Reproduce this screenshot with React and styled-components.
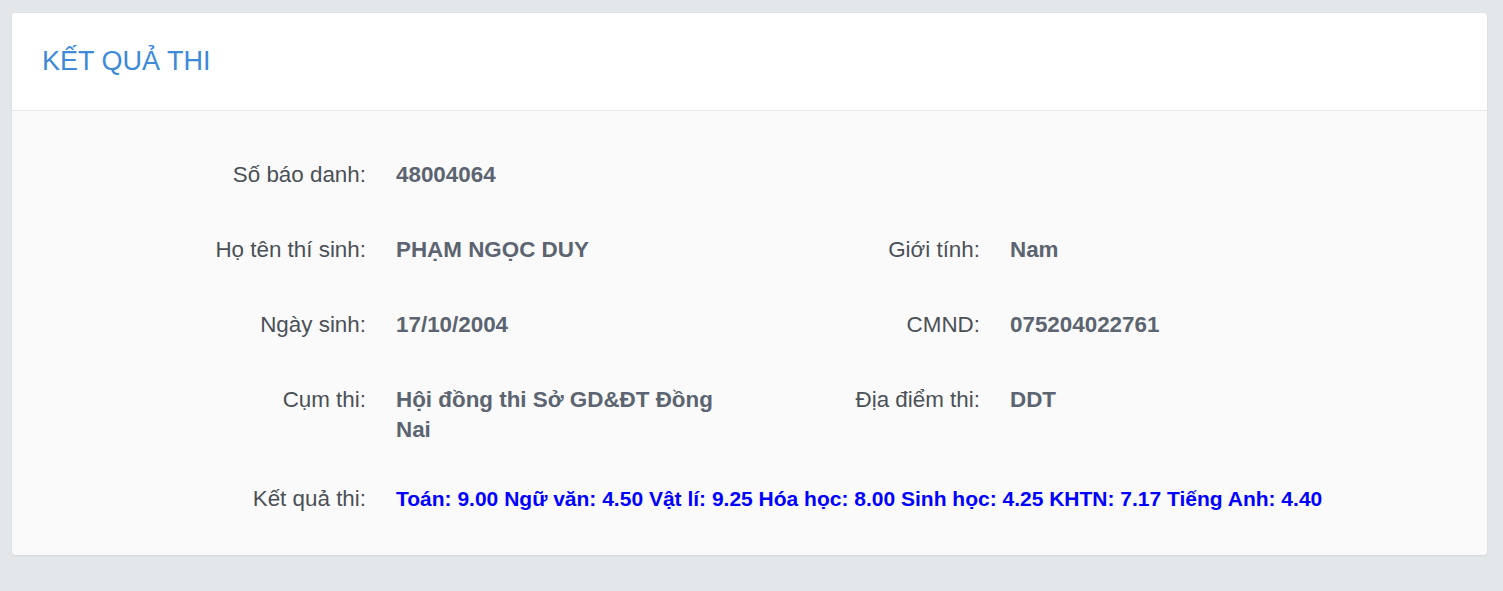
import React from "react";
import styled, { createGlobalStyle } from "styled-components";

const Global = createGlobalStyle`
  html, body { margin: 0; padding: 0; }
  body {
    background: #e3e7ea;
    font-family: "Liberation Sans", Arial, sans-serif;
  }
`;

const Page = styled.div`
  padding: 13px 16px 36px 12px;
`;

const Card = styled.section`
  background: #fafafa;
  border-radius: 4px;
  box-shadow: 0 1px 2px rgba(0, 0, 0, 0.08);
  overflow: hidden;
`;

const Header = styled.header`
  background: #ffffff;
  height: 97px;
  border-bottom: 1px solid #e5e7e9;
  display: flex;
  align-items: center;
  padding: 0 30px;
`;

const Title = styled.h1`
  margin: 0;
  font-weight: 400;
  font-size: 27px;
  color: #3d8bd8;
  letter-spacing: 0;
`;

const Body = styled.div`
  padding: 49px 0 41px;
  display: grid;
  grid-template-columns: 354px 340px 214px 1fr;
  column-gap: 30px;
  row-gap: 45px;
  line-height: 30px;
`;

const Label = styled.div`
  text-align: right;
  font-size: 22.4px;
  color: #4b5057;
  grid-column: ${(p) => p.$col};
  margin-top: ${(p) => p.$shift || 0}px;
`;

const Value = styled.div`
  font-size: 22.4px;
  font-weight: 700;
  color: #5b6470;
  grid-column: ${(p) => p.$col};
`;

const Scores = styled.div`
  grid-column: 2 / 5;
  font-size: 21px;
  font-weight: 700;
  color: #0000ff;
  margin-top: ${(p) => p.$shift || 0}px;
`;

export default function App() {
  return (
    <>
      <Global />
      <Page>
        <Card>
          <Header>
            <Title>KẾT QUẢ THI</Title>
          </Header>
          <Body>
            <Label $col={1}>Số báo danh:</Label>
            <Value $col="2 / 5">48004064</Value>

            <Label $col={1}>Họ tên thí sinh:</Label>
            <Value $col={2}>PHẠM NGỌC DUY</Value>
            <Label $col={3}>Giới tính:</Label>
            <Value $col={4}>Nam</Value>

            <Label $col={1}>Ngày sinh:</Label>
            <Value $col={2}>17/10/2004</Value>
            <Label $col={3}>CMND:</Label>
            <Value $col={4}>075204022761</Value>

            <Label $col={1}>Cụm thi:</Label>
            <Value $col={2}>Hội đồng thi Sở GD&amp;ĐT Đồng Nai</Value>
            <Label $col={3}>Địa điểm thi:</Label>
            <Value $col={4}>DDT</Value>

            <Label $col={1} $shift={-6}>Kết quả thi:</Label>
            <Scores $shift={-6}>
              Toán: 9.00 Ngữ văn: 4.50 Vật lí: 9.25 Hóa học: 8.00 Sinh học: 4.25 KHTN: 7.17 Tiếng Anh: 4.40
            </Scores>
          </Body>
        </Card>
      </Page>
    </>
  );
}
